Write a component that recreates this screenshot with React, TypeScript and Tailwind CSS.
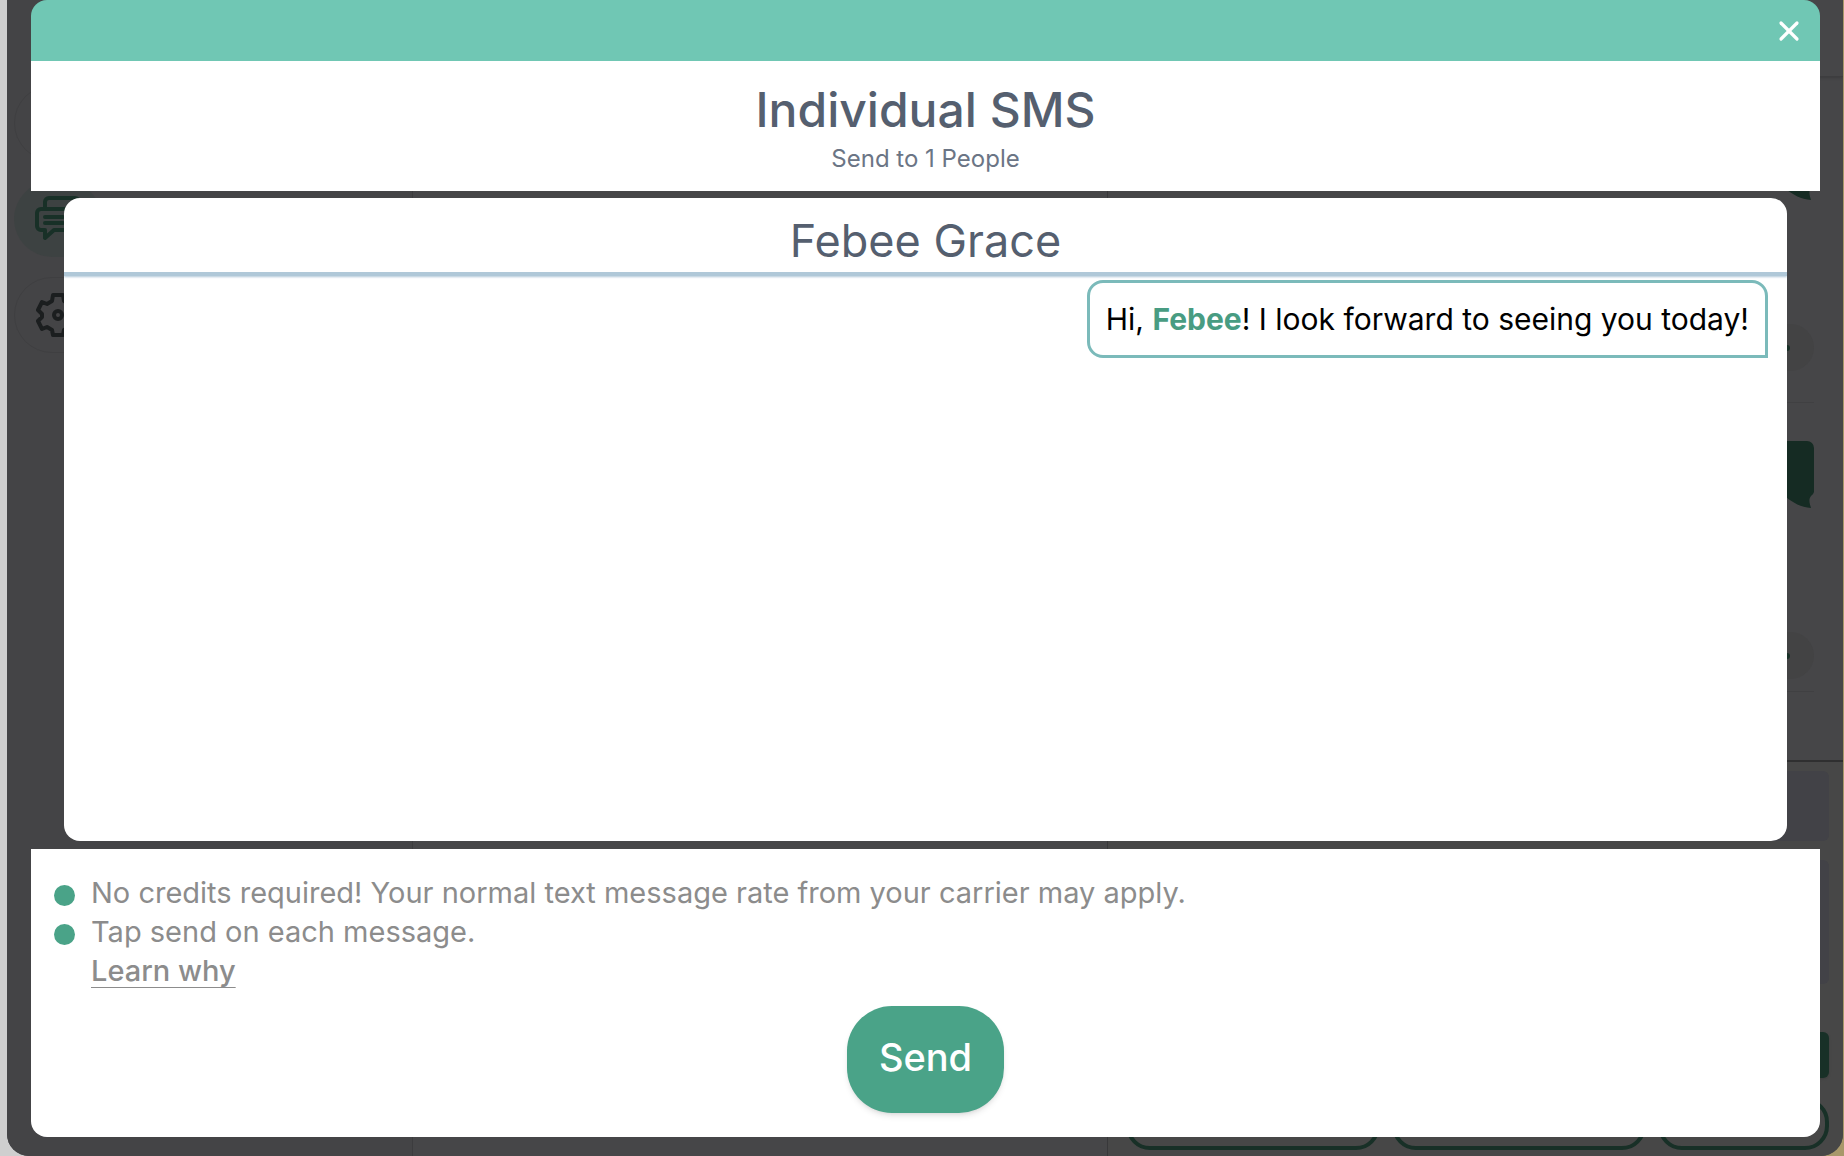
import { X } from 'lucide-react';

const notes = [
  'No credits required! Your normal text message rate from your carrier may apply.',
  'Tap send on each message.',
];

function MessagesIcon() {
  return (
    <svg viewBox="0 0 46 46" className="h-[46px] w-[46px]" fill="none" stroke="#183027" strokeWidth={4} strokeLinejoin="round" strokeLinecap="round">
      <path d="M10 12V6a4 4 0 0 1 4-4h26a4 4 0 0 1 4 4v16a4 4 0 0 1-4 4h-3" />
      <path d="M6 13h26a4 4 0 0 1 4 4v13a4 4 0 0 1-4 4H19l-9 8v-8H6a4 4 0 0 1-4-4V17a4 4 0 0 1 4-4z" />
      <path d="M10 21h18M10 27h18" />
    </svg>
  );
}

function GearIcon() {
  return (
    <svg viewBox="0 0 44 44" className="h-[44px] w-[44px]" fill="none" stroke="#1b1e1f" strokeWidth={4} strokeLinejoin="round">
      <path d="M17 2h10l1 6 5 3 5-2 4 8-4 4v3l4 4-4 8-5-2-5 3-1 5H17l-1-5-5-3-5 2-4-8 4-4v-3l-4-4 4-8 5 2 5-3z" />
      <circle cx="22" cy="22" r="4" />
    </svg>
  );
}

function Bubble() {
  return (
    <svg viewBox="0 0 120 67" className="h-[67px] w-[120px]" fill="#152b23">
      <path d="M6 0h107a7 7 0 0 1 7 7v44a7 7 0 0 1-3 4c-3 4-1 8 0 12-10-1-18-5-25-11H6a6 6 0 0 1-6-6V6a6 6 0 0 1 6-6z" />
    </svg>
  );
}

function StatusPill() {
  return (
    <div className="flex h-[47px] w-[50px] items-center rounded-full bg-[#434344] pl-5">
      <span className="h-[6px] w-[6px] rounded-full bg-[#183027]" />
    </div>
  );
}

function Sidebar() {
  return (
    <aside className="flex flex-col gap-5 border-r border-[#3c3c3e] bg-[#444446] pl-[7px] pt-[85px]">
      <div className="h-[76px] w-[88px] rounded-full border border-[#3f3f41]" />
      <div className="flex h-[76px] w-[88px] items-center justify-center rounded-full bg-[#3d4242]">
        <MessagesIcon />
      </div>
      <div className="flex h-[76px] w-[88px] items-center justify-center rounded-full border border-[#3f3f41]">
        <GearIcon />
      </div>
    </aside>
  );
}

function Thread() {
  return (
    <section className="flex flex-col bg-[#474747]">
      <div className="h-[762px] shrink-0 overflow-hidden border-b-2 border-[#2f2f30] bg-[#464648]">
        <div className="h-[77px] border-b border-[#3d3d3f] shadow-sm" />
        <div className="flex flex-col items-end pr-[29px] pt-14">
          <Bubble />
          <div className="h-[124px]" />
          <StatusPill />
          <div className="mt-[31px] h-px w-full bg-[#404042]" />
          <div className="h-[38px]" />
          <Bubble />
          <div className="h-[124px]" />
          <StatusPill />
          <div className="mt-3 h-px w-full bg-[#404042]" />
        </div>
      </div>
      <div className="flex flex-col px-[14px] pt-[9px]">
        <div className="h-[70px] rounded-md bg-[#424247]" />
        <div className="mt-[19px] h-[124px] rounded-md bg-[#424247]" />
        <div className="mt-12 h-[46px] w-[180px] self-end rounded-md bg-[#183027] shadow" />
        <div className="mt-5 flex gap-3 pl-[4px]">
          <div className="h-[52px] w-[254px] rounded-3xl border-4 border-[#183027]" />
          <div className="h-[52px] w-[254px] rounded-3xl border-4 border-[#183027]" />
          <div className="h-[52px] flex-1 rounded-3xl border-4 border-[#183027]" />
        </div>
      </div>
    </section>
  );
}

export default function App() {
  return (
    <div className="relative h-screen overflow-hidden bg-gradient-to-r from-[#cfcfcf] from-50% to-[#a8986a] to-50% pl-[7px] pr-px font-['Inter',sans-serif]">
      {/* Dimmed inbox */}
      <div className="grid h-full grid-cols-[406px_1fr_735px] overflow-hidden rounded-b-[22px] bg-[#464648]" aria-hidden="true">
        <Sidebar />
        <div className="border-r border-[#38383a]" />
        <Thread />
      </div>

      {/* Dialog */}
      <div role="dialog" aria-labelledby="sms-title" className="absolute inset-0 flex flex-col pr-6 pb-[19px] pl-[31px]">
        <div className="flex h-[61px] shrink-0 items-center justify-end rounded-t-2xl bg-[#70c7b4] pr-[15px]">
          <button type="button" aria-label="Close" className="text-white">
            <X className="h-8 w-8" strokeWidth={2.4} />
          </button>
        </div>
        <header className="flex h-[130px] shrink-0 flex-col items-center bg-white pt-5">
          <h1 id="sms-title" className="text-[48px] leading-[58px] font-medium text-[#555f6f]">Individual SMS</h1>
          <p className="text-[24px] leading-[40px] text-[#6b7585]">Send to 1 People</p>
        </header>

        <main className="mx-[33px] mt-[7px] mb-2 flex flex-1 flex-col overflow-hidden rounded-2xl bg-white">
          <h2 className="border-b-4 border-[#b0c8d8] pt-3 text-center text-[45px] leading-[62px] text-[#555f6f] shadow-[0_1px_2px_#b0c8d8]">
            Febee Grace
          </h2>
          <div className="flex justify-end pt-1 pr-[19px]">
            <p className="rounded-2xl rounded-br-none border-[3px] border-[#7bbaba] px-4 py-4 text-[30px] leading-[40px] text-black">
              Hi, <strong className="font-bold text-[#489c82]">Febee</strong>! I look forward to seeing you today!
            </p>
          </div>
        </main>

        <footer className="flex h-[288px] shrink-0 flex-col rounded-b-2xl bg-white pt-6 pl-[23px]">
          <ul className="text-[29px] leading-[39px] text-[#8c8c8c]">
            {notes.map((note) => (
              <li key={note} className="flex items-center gap-4">
                <span className="mt-[6px] h-[21px] w-[21px] shrink-0 rounded-full bg-[#4aa388]" />
                {note}
              </li>
            ))}
            <li className="pl-[37px]">
              <a href="#" className="font-medium underline decoration-1 underline-offset-[6px]">Learn why</a>
            </li>
          </ul>
          <button type="button" className="mt-4 mr-[23px] h-[107px] w-[157px] self-center rounded-[45px] bg-[#4aa388] pb-1 text-[38px] font-medium text-white shadow-md">
            Send
          </button>
        </footer>
      </div>
    </div>
  );
}
